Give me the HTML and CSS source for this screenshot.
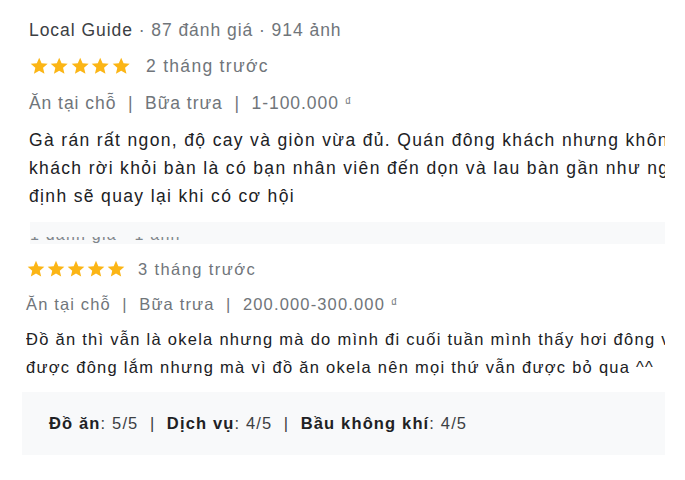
FILE: index.html
```html
<!DOCTYPE html>
<html lang="vi">
<head>
<meta charset="utf-8">
<link rel="stylesheet" href="styles.css">
</head>
<body>
<div class="page">
  <section class="review first">
    <div class="meta"><span class="guide">Local Guide</span> · 87 đánh giá · 914 ảnh</div>
    <div class="rating-row">
      <span class="stars">
        <svg viewBox="0 0 24 24"><path d="M12 17.27L18.18 21l-1.64-7.03L22 9.24l-7.19-.61L12 2 9.19 8.63 2 9.24l5.46 4.73L5.82 21z"/></svg>
        <svg viewBox="0 0 24 24"><path d="M12 17.27L18.18 21l-1.64-7.03L22 9.24l-7.19-.61L12 2 9.19 8.63 2 9.24l5.46 4.73L5.82 21z"/></svg>
        <svg viewBox="0 0 24 24"><path d="M12 17.27L18.18 21l-1.64-7.03L22 9.24l-7.19-.61L12 2 9.19 8.63 2 9.24l5.46 4.73L5.82 21z"/></svg>
        <svg viewBox="0 0 24 24"><path d="M12 17.27L18.18 21l-1.64-7.03L22 9.24l-7.19-.61L12 2 9.19 8.63 2 9.24l5.46 4.73L5.82 21z"/></svg>
        <svg viewBox="0 0 24 24"><path d="M12 17.27L18.18 21l-1.64-7.03L22 9.24l-7.19-.61L12 2 9.19 8.63 2 9.24l5.46 4.73L5.82 21z"/></svg>
      </span>
      <span class="when">2 tháng trước</span>
    </div>
    <div class="tags">Ăn tại chỗ &nbsp;|&nbsp; Bữa trưa &nbsp;|&nbsp; 1-100.000 <span class="dong">₫</span></div>
    <div class="text">
      <div class="line">Gà rán rất ngon, độ cay và giòn vừa đủ. Quán đông khách nhưng không bị chờ lâu</div>
      <div class="line">khách rời khỏi bàn là có bạn nhân viên đến dọn và lau bàn gần như ngay lập tức</div>
      <div class="line">định sẽ quay lại khi có cơ hội</div>
    </div>
  </section>

  <div class="strip"><div class="strip-clip"><div class="strip-text">1 đánh giá · 1 ảnh</div></div></div>

  <section class="review second">
    <div class="rating-row">
      <span class="stars">
        <svg viewBox="0 0 24 24"><path d="M12 17.27L18.18 21l-1.64-7.03L22 9.24l-7.19-.61L12 2 9.19 8.63 2 9.24l5.46 4.73L5.82 21z"/></svg>
        <svg viewBox="0 0 24 24"><path d="M12 17.27L18.18 21l-1.64-7.03L22 9.24l-7.19-.61L12 2 9.19 8.63 2 9.24l5.46 4.73L5.82 21z"/></svg>
        <svg viewBox="0 0 24 24"><path d="M12 17.27L18.18 21l-1.64-7.03L22 9.24l-7.19-.61L12 2 9.19 8.63 2 9.24l5.46 4.73L5.82 21z"/></svg>
        <svg viewBox="0 0 24 24"><path d="M12 17.27L18.18 21l-1.64-7.03L22 9.24l-7.19-.61L12 2 9.19 8.63 2 9.24l5.46 4.73L5.82 21z"/></svg>
        <svg viewBox="0 0 24 24"><path d="M12 17.27L18.18 21l-1.64-7.03L22 9.24l-7.19-.61L12 2 9.19 8.63 2 9.24l5.46 4.73L5.82 21z"/></svg>
      </span>
      <span class="when">3 tháng trước</span>
    </div>
    <div class="tags">Ăn tại chỗ &nbsp;|&nbsp; Bữa trưa &nbsp;|&nbsp; 200.000-300.000 <span class="dong">₫</span></div>
    <div class="text">
      <div class="line">Đồ ăn thì vẫn là okela nhưng mà do mình đi cuối tuần mình thấy hơi đông vì quán</div>
      <div class="line">được đông lắm nhưng mà vì đồ ăn okela nên mọi thứ vẫn được bỏ qua ^^</div>
    </div>
    <div class="scores">
      <b>Đồ ăn</b>: 5/5 &nbsp;|&nbsp; <b>Dịch vụ</b>: 4/5 &nbsp;|&nbsp; <b>Bầu không khí</b>: 4/5
    </div>
  </section>
</div>
</body>
</html>
```

FILE: styles.css
```css
html, body {
  margin: 0;
  padding: 0;
  background: #ffffff;
}
body {
  font-family: "Liberation Sans", Arial, sans-serif;
  color: #222222;
}
.page {
  width: 685px;
  height: 480px;
  overflow: hidden;
}
.review.first {
  padding: 13px 0 0 29px;
  font-size: 17.5px;
}
.meta, .rating-row, .tags {
  height: 35.5px;
  line-height: 35.5px;
  white-space: nowrap;
  color: #70757a;
  letter-spacing: 0.95px;
}
.guide {
  color: #3c4043;
}
.rating-row {
  display: flex;
  align-items: center;
}
.stars {
  display: inline-flex;
  align-items: center;
}
.stars svg {
  width: 20.4px;
  height: 20.4px;
  fill: #fbb515;
  flex: none;
}
.when {
  margin-left: 15px;
  letter-spacing: 1.3px;
}
.dong {
  font-size: 13px;
  letter-spacing: 0;
  vertical-align: 3px;
}
.text {
  margin-top: 6px;
  width: 636px;
  overflow: hidden;
  color: #202124;
  letter-spacing: 1.35px;
}
.line {
  white-space: nowrap;
  line-height: 28px;
}
.strip {
  margin: 12px 20px 0 30px;
  height: 22px;
  background: #f8f9fa;
  overflow: hidden;
}
.strip-clip {
  margin-top: 15px;
  height: 7px;
  overflow: hidden;
}
.strip-text {
  margin-top: -10px;
  font-size: 16px;
  line-height: 16px;
  letter-spacing: 1.2px;
  color: #80868b;
}
.review.second {
  padding: 8px 0 0 26px;
  font-size: 16.5px;
}
.review.second .meta,
.review.second .rating-row,
.review.second .tags {
  height: 34px;
  line-height: 34px;
  letter-spacing: 1.15px;
}
.review.second .stars svg {
  width: 20px;
  height: 20px;
}
.review.second .when {
  margin-left: 12px;
  letter-spacing: 1.4px;
}
.review.second .dong {
  letter-spacing: 0;
}
.review.second .text {
  margin-top: 5px;
  width: 639px;
  letter-spacing: 1.27px;
}
.scores {
  margin: 11px 20px 0 -4px;
  height: 63px;
  line-height: 63px;
  padding-left: 27px;
  background: #f8f9fa;
  font-size: 16.5px;
  letter-spacing: 1.15px;
  color: #3c4043;
  white-space: nowrap;
}
.scores b {
  color: #202124;
}
```
